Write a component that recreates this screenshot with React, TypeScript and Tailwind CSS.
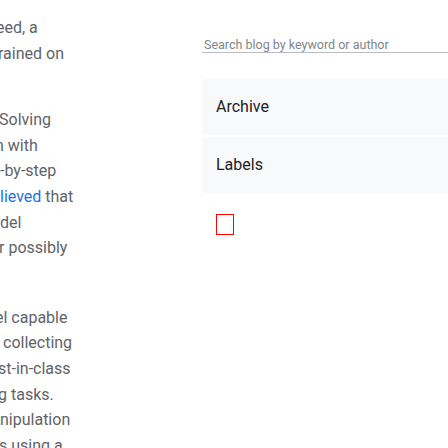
import React from "react";

const para = "text-[16px] leading-[25.6px] text-[#5f6368] whitespace-nowrap";

export default function App() {
  return (
    <div className="w-[448px] h-[448px] overflow-hidden bg-white flex" style={{ fontFamily: "Roboto, 'Liberation Sans', sans-serif" }}>
      <div className="w-[202px] shrink-0 overflow-hidden pt-[15px]">
        <div className={para + " mb-[41px]"}>
          <div className="-ml-[4px]">eed, a</div>
          <div className="-ml-[2px]">rained on</div>
        </div>
        <div className={para + " mb-[44px]"}>
          <div className="-ml-[1px]">Solving</div>
          <div className="-ml-[5px]">n with</div>
          <div className="ml-0">-by-step</div>
          <div className="ml-0"><span className="text-[#1a73e8]">lieved</span> that</div>
          <div className="ml-0">del</div>
          <div className="-ml-[1px]">r possibly</div>
        </div>
        <div className={para}>
          <div className="-ml-[5px]">el capable</div>
          <div className="ml-[3px]">collecting</div>
          <div className="-ml-[2px]">st-in-class</div>
          <div className="-ml-[2px]">g tasks.</div>
          <div className="ml-0">nipulation</div>
          <div className="-ml-[1px]">s using a</div>
        </div>
      </div>
      <div className="flex-1 flex flex-col pt-[36px]">
        <div className="border-b border-[#bdbdbd] pl-[2px] h-[17px] text-[12.5px] leading-[17px] text-[#80868b] whitespace-nowrap">
          Search blog by keyword or author
        </div>
        <div className="mt-[26px] flex flex-col gap-[2px]">
          <div className="h-[56px] bg-[#f8f9fa] flex items-center pl-[14px] text-[16px] text-[#202124]">Archive</div>
          <div className="h-[56px] bg-[#f8f9fa] flex items-center pl-[14px] text-[16px] text-[#202124]">Labels</div>
        </div>
        <div className="mt-[21px] ml-[14px] w-[18px] h-[21px] border border-[#ff0000]"></div>
      </div>
    </div>
  );
}
